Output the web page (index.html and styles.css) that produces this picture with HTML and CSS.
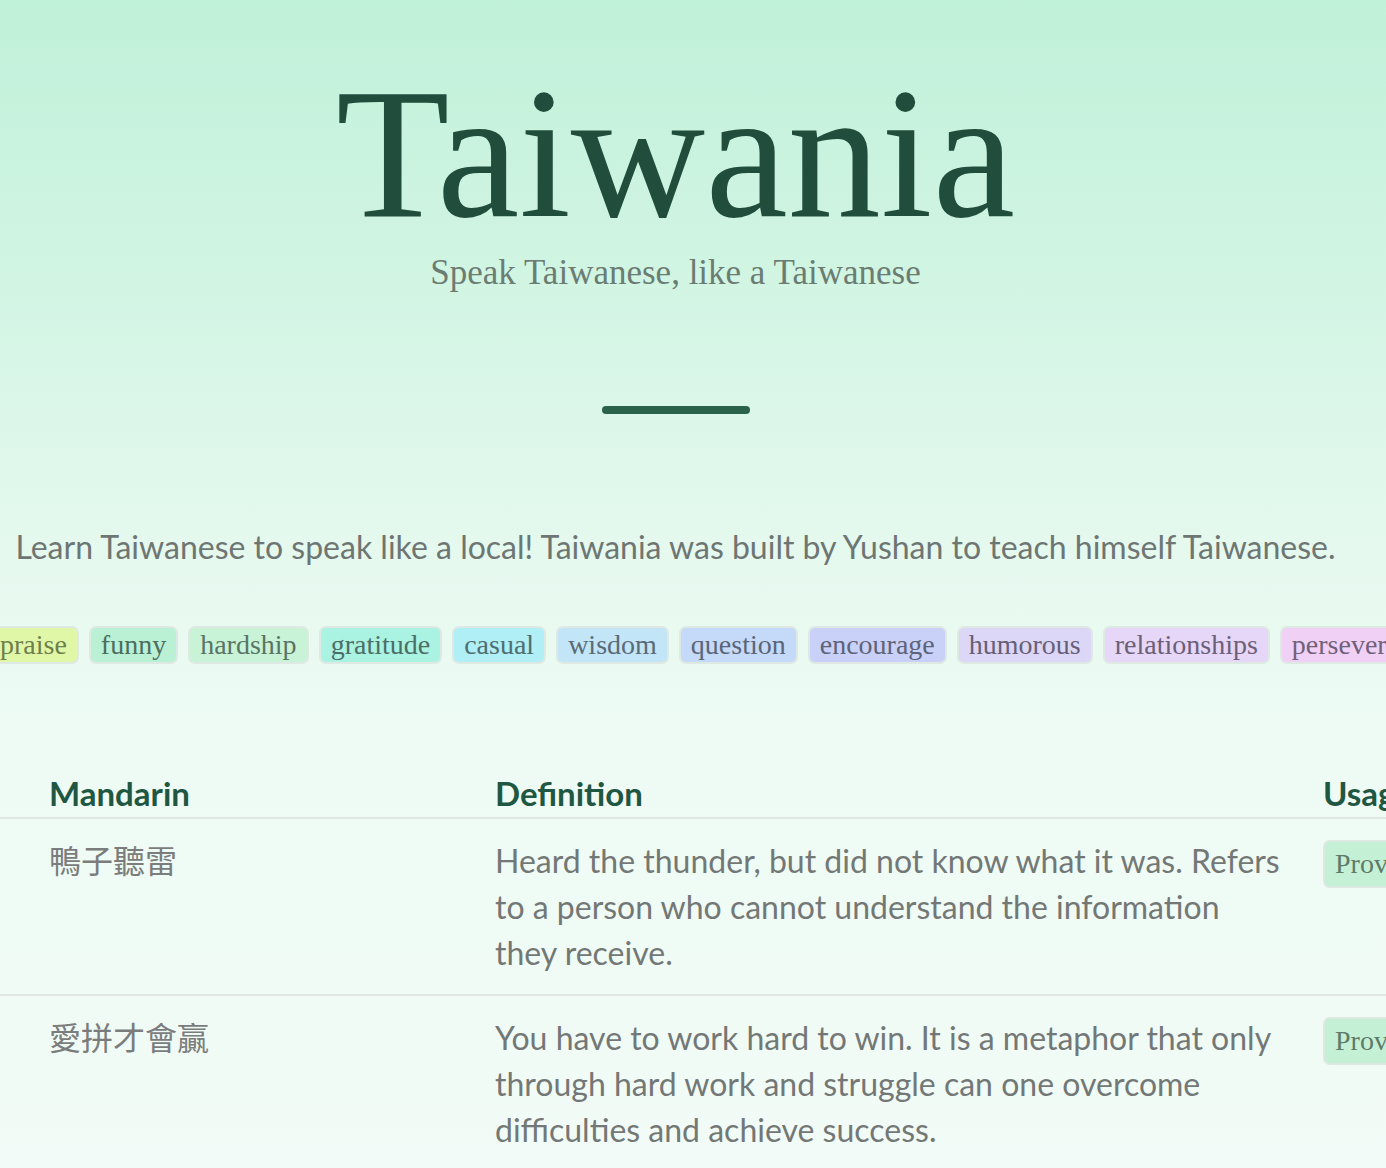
FILE: index.html
```html
<!DOCTYPE html>
<html lang="en">
<head>
<meta charset="utf-8">
<title>Taiwania</title>
<link rel="stylesheet" href="styles.css">
</head>
<body>
<div class="page">
  <header class="hero">
    <h1 class="title">Taiwania</h1>
    <p class="subtitle">Speak Taiwanese, like a Taiwanese</p>
    <div class="divider"></div>
  </header>

  <p class="intro">Learn Taiwanese to speak like a local! Taiwania was built by Yushan to teach himself Taiwanese.</p>

  <div class="tags">
    <span class="tag t-praise">praise</span>
    <span class="tag t-funny">funny</span>
    <span class="tag t-hardship">hardship</span>
    <span class="tag t-gratitude">gratitude</span>
    <span class="tag t-casual">casual</span>
    <span class="tag t-wisdom">wisdom</span>
    <span class="tag t-question">question</span>
    <span class="tag t-encourage">encourage</span>
    <span class="tag t-humorous">humorous</span>
    <span class="tag t-relationships">relationships</span>
    <span class="tag t-persevere">persevere</span>
  </div>

  <div class="table">
    <div class="row head">
      <div class="cell">Mandarin</div>
      <div class="cell">Definition</div>
      <div class="cell">Usage</div>
    </div>
    <div class="row">
      <div class="cell zh">鴨子聽雷</div>
      <div class="cell def">Heard the thunder, but did not know what it was. Refers to a person who cannot understand the information they receive.</div>
      <div class="cell"><span class="badge">Proverb</span></div>
    </div>
    <div class="row">
      <div class="cell zh">愛拼才會贏</div>
      <div class="cell def">You have to work hard to win. It is a metaphor that only through hard work and struggle can one overcome difficulties and achieve success.</div>
      <div class="cell"><span class="badge">Proverb</span></div>
    </div>
  </div>
</div>
</body>
</html>
```

FILE: styles.css
```css
html, body {
  margin: 0;
  padding: 0;
}

body {
  width: 1386px;
  min-height: 1168px;
  overflow: hidden;
  background: linear-gradient(180deg, #c0f1d9 0px, #d3f5e4 300px, #e6f9ef 560px, #eefbf4 760px, #f2fbf7 1168px);
  font-family: Lato, "Noto Sans CJK TC", sans-serif;
}

.page {
  display: flex;
  flex-direction: column;
}

.hero {
  width: 1351px;
  display: flex;
  flex-direction: column;
  align-items: center;
  padding-top: 60px;
}

.title {
  margin: 0;
  font-family: "Liberation Serif", serif;
  font-weight: 400;
  font-size: 186px;
  line-height: 1;
  color: #214d3c;
}

.subtitle {
  margin: 6px 0 0;
  font-family: "Liberation Serif", serif;
  font-size: 35px;
  line-height: 1.2;
  color: #6b7d73;
}

.divider {
  margin-top: 112px;
  width: 148px;
  height: 8px;
  border-radius: 4px;
  background: #2a6149;
}

.intro {
  width: 1351px;
  margin: 110px 0 0;
  text-align: center;
  font-size: 32px;
  line-height: 46px;
  color: #6e7673;
}

.tags {
  margin: 56px 0 0 -12px;
  display: flex;
  gap: 10px;
  white-space: nowrap;
}

.tag {
  flex: none;
  height: 38px;
  box-sizing: border-box;
  padding: 0 10px;
  border: 2px solid #dfe9e4;
  border-radius: 7px;
  font-family: "Liberation Serif", serif;
  font-size: 28px;
  line-height: 33px;
}

.t-praise { background: #e1f7a8; color: #6f7f4c; }
.t-funny { background: #baf1d5; color: #4d6e5e; }
.t-hardship { background: #c8f3d7; color: #5a7466; }
.t-gratitude { background: #aaf2e2; color: #4b6f67; }
.t-casual { background: #b0eff5; color: #4f6e72; }
.t-wisdom { background: #c2e5f8; color: #5a6b77; }
.t-question { background: #c5d9f8; color: #5a6678; }
.t-encourage { background: #c9d1f9; color: #5d6379; }
.t-humorous { background: #dcd6f7; color: #675f78; }
.t-relationships { background: #e6d6f7; color: #6b6078; }
.t-persevere { background: #f0d1f5; color: #71607a; }

.table {
  margin-top: 105px;
  display: flex;
  flex-direction: column;
}

.row {
  display: grid;
  grid-template-columns: 398px 788px 200px;
  column-gap: 48px;
  padding: 19px 0 18px 49px;
  border-bottom: 2px solid #dfe6e3;
  font-size: 32px;
  line-height: 46px;
  color: #737876;
}

.row .cell:nth-child(3) {
  margin-left: -8px;
}

.row.head {
  padding: 0 0 0 49px;
  font-size: 33px;
  line-height: 48px;
  font-weight: 700;
  color: #1f5742;
}

.zh {
  font-size: 32px;
  color: #7a7d7c;
}

.badge {
  display: inline-block;
  height: 48px;
  box-sizing: border-box;
  padding: 0 10px;
  border: 2px solid #dbe9e1;
  border-radius: 7px;
  background: #c4f1d5;
  font-family: "Liberation Serif", serif;
  font-size: 28px;
  line-height: 44px;
  color: #5e7a6a;
}
```
